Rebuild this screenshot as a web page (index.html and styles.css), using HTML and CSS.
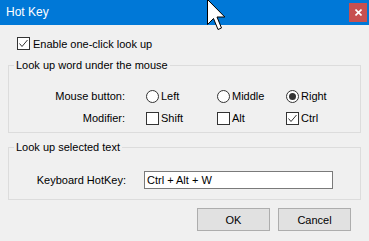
FILE: index.html
```html
<!DOCTYPE html>
<html>
<head>
<meta charset="utf-8">
<link rel="stylesheet" href="styles.css">
</head>
<body>
<div class="window">
  <div class="titlebar">
    <span class="title">Hot Key</span>
    <div class="close">
      <svg width="7" height="7" viewBox="0 0 7 7"><path d="M0.5 0.5 L6.5 6.5 M6.5 0.5 L0.5 6.5" stroke="#fff" stroke-width="1.6"/></svg>
    </div>
  </div>
  <div class="content">
    <div class="check-row">
      <span class="box"><svg width="11" height="11" viewBox="0 0 11 11"><polyline points="1.5,5.5 4,8.5 9.5,2" fill="none" stroke="#333" stroke-width="1"/></svg></span>
      <span>Enable one-click look up</span>
    </div>
    <fieldset class="group group-mouse">
      <legend>Look up word under the mouse</legend>
      <div class="grid">
        <span class="lbl">Mouse button:</span>
        <span class="opt"><span class="radio"></span>Left</span>
        <span class="opt"><span class="radio"></span>Middle</span>
        <span class="opt"><span class="radio on"><span class="dot"></span></span>Right</span>
        <span class="lbl">Modifier:</span>
        <span class="opt"><span class="box"></span>Shift</span>
        <span class="opt"><span class="box"></span>Alt</span>
        <span class="opt"><span class="box"><svg width="11" height="11" viewBox="0 0 11 11"><polyline points="1.5,5.5 4,8.5 9.5,2" fill="none" stroke="#333" stroke-width="1"/></svg></span>Ctrl</span>
      </div>
    </fieldset>
    <fieldset class="group group-text">
      <legend>Look up selected text</legend>
      <div class="hk-row">
        <span class="lbl">Keyboard HotKey:</span>
        <div class="input">Ctrl + Alt + W</div>
      </div>
    </fieldset>
    <div class="buttons">
      <div class="btn">OK</div>
      <div class="btn">Cancel</div>
    </div>
  </div>
  <svg class="cursor" width="20" height="32" viewBox="0 0 20 32">
    <path d="M0.5 0.5 L0.5 25.5 L6.5 19.5 L11 30.5 L14.5 29 L10 18 L17.8 18 Z" fill="#fff" stroke="#000" stroke-width="1"/>
  </svg>
</div>
</body>
</html>
```
FILE: styles.css
```css
* { box-sizing: border-box; }
html, body { margin: 0; padding: 0; }
body {
  width: 369px;
  height: 241px;
  overflow: hidden;
  background: #f0f0f0;
  font-family: "Liberation Sans", Arial, sans-serif;
  font-size: 11px;
  color: #000;
}
.window {
  position: relative;
  width: 369px;
  height: 241px;
  background: #f0f0f0;
}
.titlebar {
  height: 25px;
  background: #0078d7;
  display: flex;
  align-items: flex-start;
  padding-left: 6px;
}
.title {
  color: #fff;
  font-size: 12px;
  line-height: 25px;
}
.close {
  margin-left: auto;
  margin-right: 2px;
  margin-top: 3px;
  width: 18px;
  height: 19px;
  background: #c75050;
  display: flex;
  align-items: center;
  justify-content: center;
}
.content {
  padding: 12px 8px 0 8px;
}
.check-row {
  display: flex;
  align-items: center;
  height: 13px;
  margin-left: 9px;
  gap: 3px;
}
.box {
  width: 13px;
  height: 13px;
  border: 1px solid #333;
  background: #fff;
  display: inline-flex;
  flex: none;
}
.radio {
  width: 13px;
  height: 13px;
  border: 1px solid #333;
  border-radius: 50%;
  background: #fff;
  display: inline-flex;
  align-items: center;
  justify-content: center;
  flex: none;
}
.dot {
  width: 7px;
  height: 7px;
  border-radius: 50%;
  background: #333;
}
.group {
  margin: 0;
  padding: 0;
  border: 1px solid #dcdcdc;
  min-width: 0;
}
.group legend {
  margin-left: 5px;
  padding: 0 2px;
  line-height: 15px;
}
.group-mouse {
  margin-top: 8px;
  padding: 15px 0 6px 0;
}
.grid {
  display: grid;
  grid-template-columns: 137px 71px 69px 1fr;
  row-gap: 6px;
}
.lbl {
  text-align: right;
  padding-right: 21px;
  line-height: 16px;
}
.opt {
  display: flex;
  align-items: center;
  gap: 2px;
  height: 16px;
}
.group-text {
  margin-top: 7px;
  padding: 16px 0 10px 0;
}
.hk-row {
  display: grid;
  grid-template-columns: 117px 189px;
  align-items: center;
}
.hk-row .lbl {
  padding-right: 0;
}
.input {
  margin-left: 18px;
  width: 189px;
  height: 18px;
  border: 1px solid #7a7a7a;
  background: #fff;
  padding-left: 2px;
  line-height: 16px;
}
.buttons {
  display: flex;
  justify-content: flex-end;
  gap: 8px;
  margin-top: 8px;
  padding-right: 10px;
}
.btn {
  width: 73px;
  height: 23px;
  background: #e1e1e1;
  border: 1px solid #adadad;
  display: flex;
  align-items: center;
  justify-content: center;
}
.cursor {
  position: absolute;
  left: 207px;
  top: -1px;
}
```
